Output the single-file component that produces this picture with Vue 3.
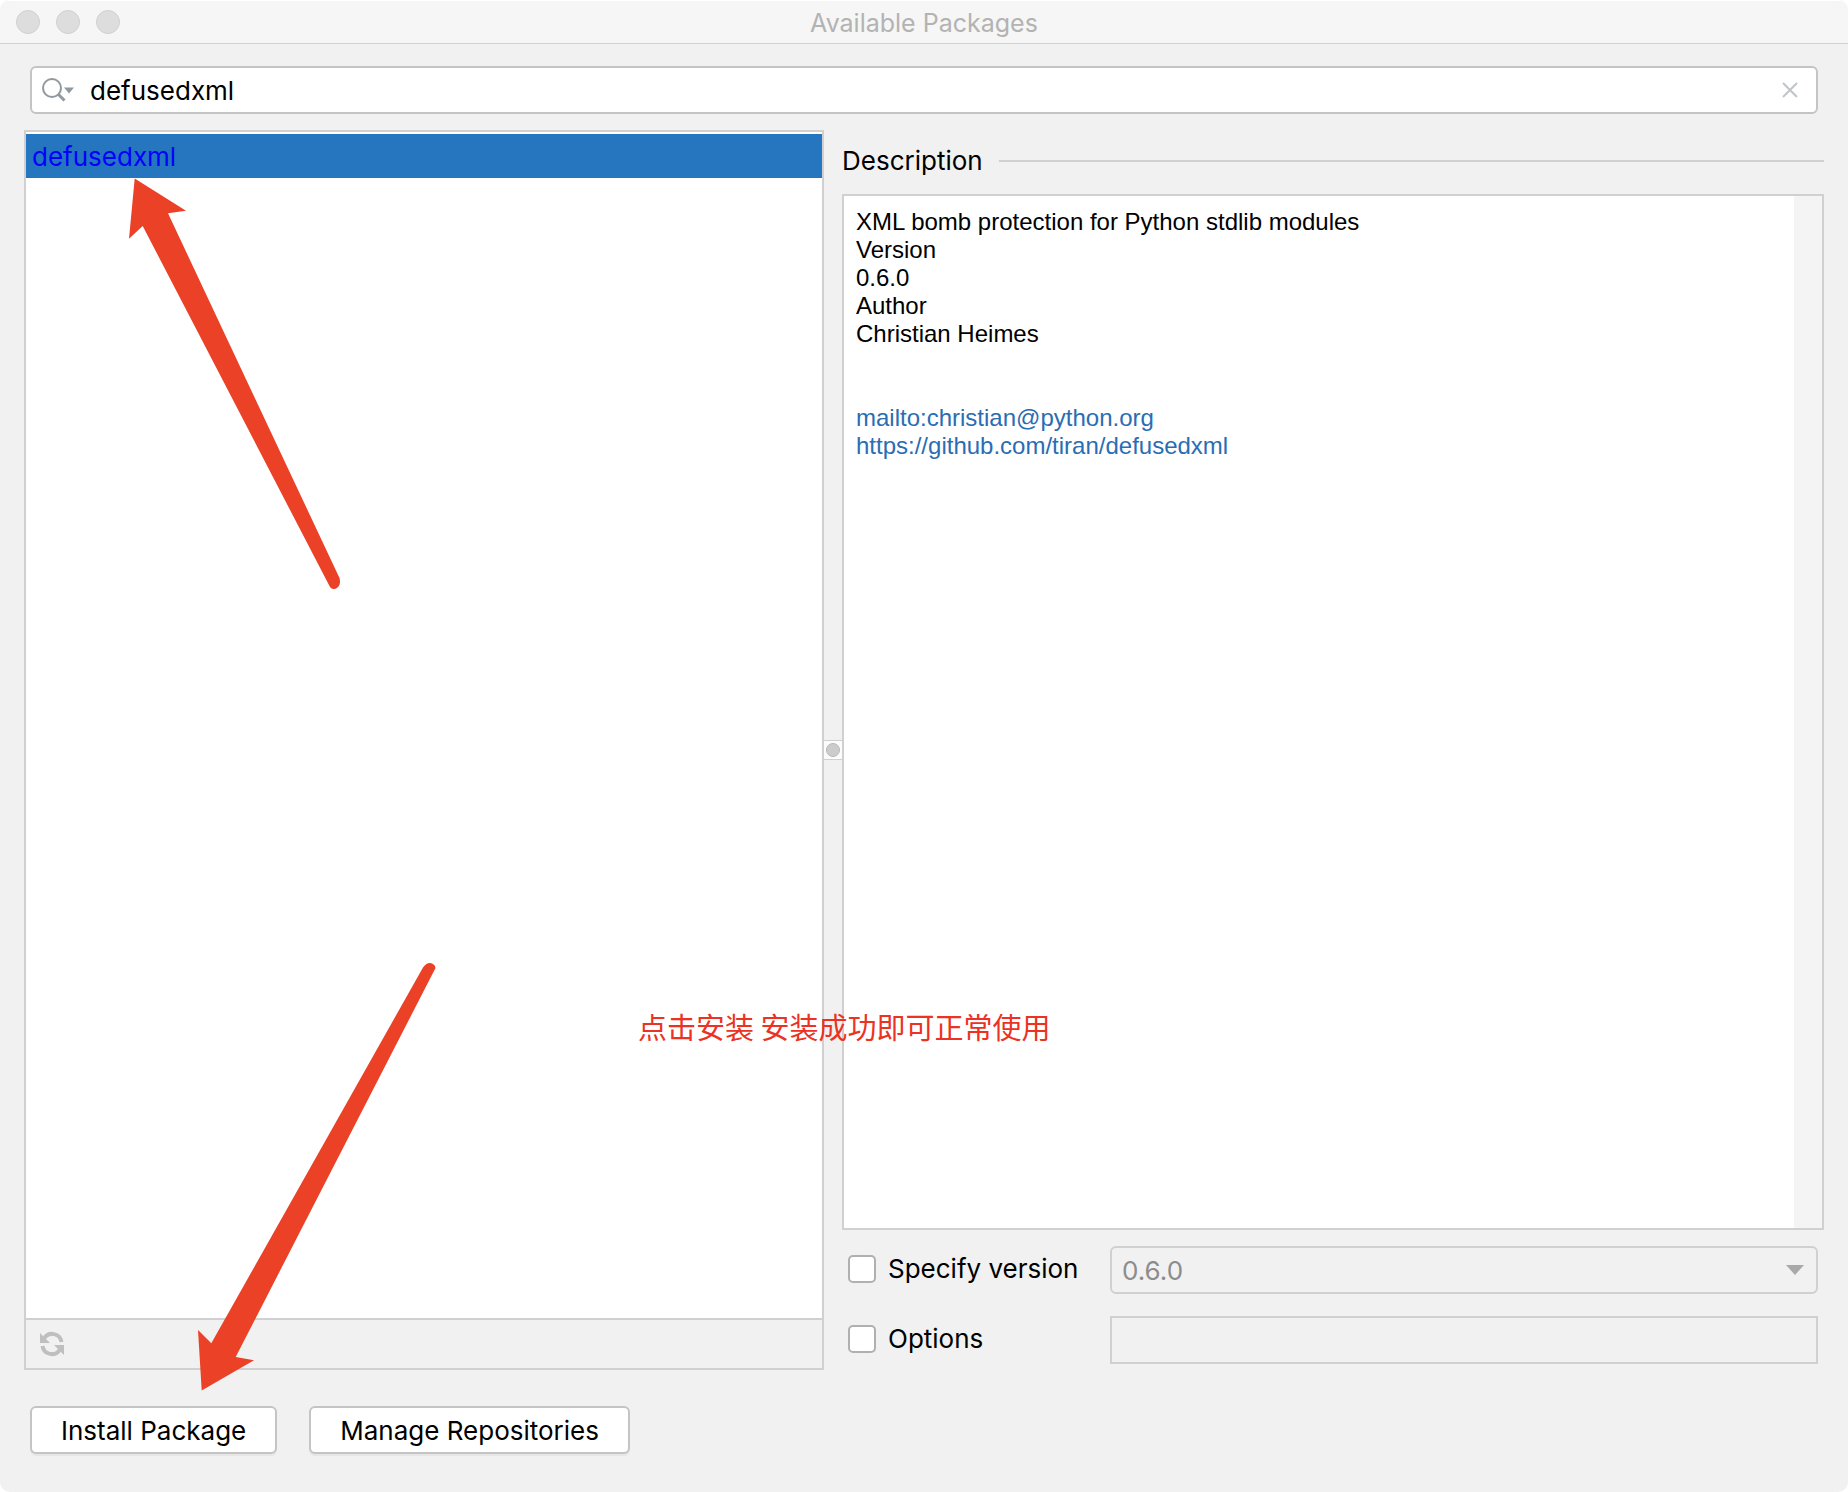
<template>
  <div class="window">
    <header class="titlebar">
      <div class="lights">
        <button v-for="name in lights" :key="name" type="button" class="light" :aria-label="name"></button>
      </div>
      <h1>Available Packages</h1>
    </header>

    <main>
      <!-- Search -->
      <div class="search">
        <svg class="search-icon" width="34" height="26" viewBox="0 0 34 26" aria-hidden="true">
          <circle cx="10" cy="11" r="9" fill="none" stroke="#8f999f" stroke-width="2" />
          <path d="M16 17L22.500 23.500" stroke="#8f999f" stroke-width="3" />
          <path d="M22 10.500h10l-5 6z" fill="#8f999f" />
        </svg>
        <input v-model="query" type="text" aria-label="Search packages">
        <button type="button" class="clear" aria-label="Clear" @click="query = ''">
          <svg width="16" height="16" viewBox="0 0 16 16">
            <path d="M1 1L15 15M15 1L1 15" stroke="#c0c5c9" stroke-width="2" />
          </svg>
        </button>
      </div>

      <div class="panes">
        <!-- Package list -->
        <section class="packages">
          <ul>
            <li v-for="name in filteredPackages" :key="name" :class="{ selected: name === selected }" @click="selected = name">{{ name }}</li>
          </ul>
          <div class="toolbar">
            <button type="button" class="reload" aria-label="Reload">
              <svg width="24" height="26" viewBox="0 0 24 26">
                <g fill="none" stroke="#bfbfbf" stroke-width="4">
                  <path d="M4 7.500A9.500 9.500 0 0 1 21.500 11" />
                  <path d="M20 18.500A9.500 9.500 0 0 1 2.500 15" />
                </g>
                <path d="M0 2v10h10zM24 24v-10h-10z" fill="#bfbfbf" />
              </svg>
            </button>
          </div>
        </section>

        <div class="splitter">
          <span class="handle"></span>
        </div>

        <!-- Package details -->
        <section class="details">
          <h2>Description</h2>
          <div class="description">
            <div class="text">
              <p>XML bomb protection for Python stdlib modules</p>
              <p>Version</p>
              <p>{{ version }}</p>
              <p>Author</p>
              <p>Christian Heimes</p>
              <p class="links">
                <a href="mailto:christian@python.org">mailto:christian@python.org</a>
                <a href="https://github.com/tiran/defusedxml">https://github.com/tiran/defusedxml</a>
              </p>
            </div>
            <div class="scrollbar"></div>
          </div>
          <div class="options">
            <label><input v-model="useVersion" type="checkbox">Specify version</label>
            <div class="select">
              <select v-model="version" :disabled="!useVersion" aria-label="Version">
                <option>0.6.0</option>
              </select>
              <svg width="18" height="10" viewBox="0 0 18 10" aria-hidden="true">
                <path d="M0 0h18l-9 10z" fill="#a9a9a9" />
              </svg>
            </div>
            <label><input v-model="useOptions" type="checkbox">Options</label>
            <input v-model="options" class="options-text" type="text" :disabled="!useOptions" aria-label="Options text">
          </div>
        </section>
      </div>

      <footer>
        <button type="button">Install Package</button>
        <button type="button">Manage Repositories</button>
      </footer>
    </main>

    <!-- Annotations -->
    <svg class="arrow arrow-package" width="220" height="420" viewBox="0 0 220 420" aria-hidden="true">
      <path d="M14.700 8.500L66 40.700L48 43.300L219.500 408C221 414 219 417 216 418.500Q212 420 210 417L22.700 56L9 68.700Z" />
    </svg>
    <svg class="arrow arrow-install" width="250" height="440" viewBox="0 0 250 440" aria-hidden="true">
      <path d="M11.700 440.500L8 380L21.300 393.300L233 17.500Q238 11 243 14Q247 17 244.500 20L45.700 407L64 410.300Z" />
    </svg>
    <p class="note">点击安装 安装成功即可正常使用</p>
  </div>
</template>

<script setup>
import { ref, computed } from 'vue';

const lights = ['Close', 'Minimize', 'Zoom'];

// Packages
const packages = ref(['defusedxml']);
const query = ref('defusedxml');
const selected = ref('defusedxml');

const filteredPackages = computed(() => packages.value.filter(name => name.includes(query.value)));

// Install options
const version = ref('0.6.0');
const useVersion = ref(false);
const useOptions = ref(false);
const options = ref('');
</script>

<style>
body {
  background: #fff;
}
</style>

<style scoped>
* {
  box-sizing: border-box;
  margin: 0;
  padding: 0;
}

.window {
  position: relative;
  display: flex;
  flex-direction: column;
  min-height: 100vh;
  background: #f1f1f1;
  border-radius: 10px;
  overflow: hidden;
  color: #000;
  font-family: Inter, "Noto Sans CJK SC", sans-serif;
  font-size: 26px;
  line-height: 30px;
}

button,
input,
select {
  font: inherit;
  color: inherit;
}

.titlebar {
  display: grid;
  grid-template-columns: 1fr auto 1fr;
  align-items: center;
  height: 44px;
  padding: 0 16px;
  background: #f6f6f6;
  border-top: 1px solid #fff;
  border-bottom: 1px solid #d1d1d1;
}

.titlebar h1 {
  padding-top: 2px;
  color: #b3b3b3;
  font-size: 25px;
  font-weight: 400;
}

.lights {
  display: flex;
  gap: 16px;
}

.light {
  width: 24px;
  height: 24px;
  border: 1px solid #d0d0d0;
  border-radius: 50%;
  background: #dddddd;
}

main {
  flex: 1;
  display: flex;
  flex-direction: column;
  padding: 22px 24px 38px;
}

.search {
  display: flex;
  align-items: center;
  height: 48px;
  margin: 0 6px 16px;
  padding: 0 18px 0 10px;
  border: 2px solid #c4c4c4;
  border-radius: 6px;
  background: #fff;
}

.search input {
  flex: 1;
  min-width: 0;
  padding: 2px 0 0 14px;
  border: none;
  outline: none;
  background: none;
}

.clear,
.reload {
  display: flex;
  border: none;
  background: none;
}

.panes {
  flex: 1;
  display: grid;
  grid-template-columns: 800fr 18px 982fr;
}

.packages {
  display: flex;
  flex-direction: column;
  border: 2px solid #d0d0d0;
  background: #fff;
}

.packages ul {
  flex: 1;
  padding-top: 2px;
  list-style-type: none;
}

.packages li {
  padding: 8px 6px 6px;
  color: #0000ff;
}

.packages li.selected {
  background: #2675bf;
}

.toolbar {
  display: flex;
  align-items: center;
  height: 50px;
  padding: 0 14px;
  border-top: 2px solid #d0d0d0;
  background: #f1f1f1;
}

.splitter {
  display: flex;
  align-items: center;
}

.handle {
  display: flex;
  align-items: center;
  justify-content: center;
  width: 18px;
  height: 20px;
  border-top: 1px solid #d0d0d0;
  border-bottom: 1px solid #d0d0d0;
  background: #fcfcfc;
}

.handle::before {
  content: "";
  width: 12px;
  height: 12px;
  border: 1px solid #b8b8b8;
  border-radius: 50%;
  background: #cccccc;
}

.details {
  display: flex;
  flex-direction: column;
}

.details h2 {
  display: flex;
  align-items: center;
  gap: 16px;
  padding: 16px 0 18px;
  font-size: 26px;
  font-weight: 400;
}

.details h2::after {
  content: "";
  flex: 1;
  height: 2px;
  background: #d0d0d0;
}

.description {
  flex: 1;
  display: flex;
  border: 2px solid #d0d0d0;
  background: #fff;
}

.text {
  flex: 1;
  padding: 12px;
  font-family: "Liberation Sans", Arial, sans-serif;
  font-size: 24px;
  line-height: 28px;
}

.links {
  display: flex;
  flex-direction: column;
  align-items: flex-start;
  margin-top: 56px;
}

.links a {
  color: #2a6db2;
  text-decoration: none;
}

.scrollbar {
  width: 28px;
  background: #f4f4f4;
}

.options {
  display: grid;
  grid-template-columns: 262px 1fr;
  align-items: center;
  row-gap: 22px;
  padding: 16px 6px 6px;
}

.options label {
  display: flex;
  align-items: center;
  gap: 12px;
  padding-bottom: 3px;
}

.options input[type="checkbox"] {
  appearance: none;
  width: 28px;
  height: 28px;
  border: 2px solid #b0b0b0;
  border-radius: 5px;
  background: #fff;
}

.options input[type="checkbox"]:checked {
  background: #2675bf;
}

.select {
  display: grid;
  align-items: center;
}

.select select,
.select svg {
  grid-area: 1 / 1;
}

.select svg {
  justify-self: end;
  margin-right: 14px;
  pointer-events: none;
}

.select select,
.options-text {
  width: 100%;
  height: 48px;
  padding: 2px 10px 0;
  border: 2px solid #d0d0d0;
  background: #f1f1f1;
}

.select select {
  appearance: none;
  border-radius: 6px;
  color: #8c8c8c;
  opacity: 1;
}

footer {
  display: flex;
  gap: 32px;
  padding: 36px 6px 0;
}

footer button {
  height: 48px;
  padding: 2px 29px 0;
  border: 2px solid #c4c4c4;
  border-radius: 6px;
  background: #fff;
  box-shadow: 0 2px 0 #e6e6e6;
}

.arrow {
  position: absolute;
  overflow: visible;
  fill: #eb4127;
  pointer-events: none;
}

.arrow-package {
  left: 120px;
  top: 170px;
}

.arrow-install {
  left: 190px;
  top: 950px;
}

.note {
  position: absolute;
  left: 638px;
  top: 1006px;
  color: #eb3223;
  font-family: "Noto Sans CJK SC", sans-serif;
  font-size: 29px;
  line-height: 40px;
  white-space: nowrap;
}
</style>
